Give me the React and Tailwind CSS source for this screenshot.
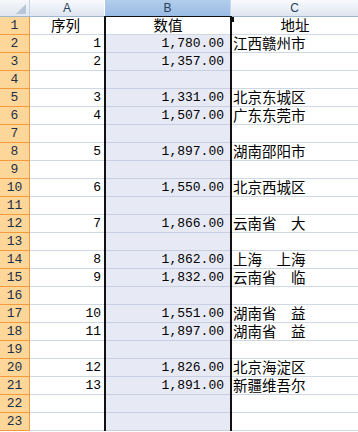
const rows = [
  ["1", "序列", "数值", "地址"],
  ["2", "1", "1,780.00", "江西赣州市"],
  ["3", "2", "1,357.00", ""],
  ["4", "", "", ""],
  ["5", "3", "1,331.00", "北京东城区"],
  ["6", "4", "1,507.00", "广东东莞市"],
  ["7", "", "", ""],
  ["8", "5", "1,897.00", "湖南邵阳市"],
  ["9", "", "", ""],
  ["10", "6", "1,550.00", "北京西城区"],
  ["11", "", "", ""],
  ["12", "7", "1,866.00", "云南省\u3000大"],
  ["13", "", "", ""],
  ["14", "8", "1,862.00", "上海\u3000上海"],
  ["15", "9", "1,832.00", "云南省\u3000临"],
  ["16", "", "", ""],
  ["17", "10", "1,551.00", "湖南省\u3000益"],
  ["18", "11", "1,897.00", "湖南省\u3000益"],
  ["19", "", "", ""],
  ["20", "12", "1,826.00", "北京海淀区"],
  ["21", "13", "1,891.00", "新疆维吾尔"],
  ["22", "", "", ""],
  ["23", "", "", ""],
];

const mono = "font-['Liberation_Mono',monospace] text-[13px] leading-none text-black";
const cjk = "font-['Noto_Sans_CJK_SC','Noto_Sans',sans-serif] text-[14.5px] leading-none text-black";

function HeaderRow() {
  return (
    <div className="flex h-[17px] border-b border-[#9eb6ce]">
      <div className="relative w-[30px] shrink-0 border-r border-[#c5d2e2] bg-gradient-to-b from-[#f6f8fb] to-[#dfe6ef]">
        <div className="absolute bottom-[2px] right-[3px] h-0 w-0 border-b-[10px] border-l-[10px] border-b-[#b8c6d8] border-l-transparent" />
      </div>
      <div className="flex w-[75px] shrink-0 items-center justify-center border-r border-white bg-gradient-to-b from-[#f8fafd] to-[#dfe6f1] font-['Liberation_Sans',sans-serif] text-[12px] leading-none text-[#27415f]">
        A
      </div>
      <div className="flex w-[126px] shrink-0 items-center justify-center border-r border-[#c9daee] bg-gradient-to-b from-[#b3cdec] to-[#99bbe4] font-['Liberation_Sans',sans-serif] text-[12px] leading-none text-[#27415f]">
        B
      </div>
      <div className="flex flex-1 items-center justify-center bg-gradient-to-b from-[#f8fafd] to-[#dfe6f1] font-['Liberation_Sans',sans-serif] text-[12px] leading-none text-[#27415f]">
        C
      </div>
    </div>
  );
}

function Row({ r, i }) {
  const head = i === 0;
  return (
    <div className="flex h-[18px]">
      <div className="flex w-[30px] shrink-0 items-center justify-center border-b border-r border-[#f29a3c] bg-[#fdd69a] font-['Liberation_Mono',monospace] text-[13px] leading-none text-[#1e2f45]">
        {r[0]}
      </div>
      <div className={`flex w-[74px] shrink-0 items-center border-b border-[#d0d7e5] bg-white pr-[3px] ${head ? "justify-center " + cjk : "justify-end " + mono}`}>
        {r[1]}
      </div>
      <div className={`relative flex w-[128px] shrink-0 items-center border-x-2 border-x-[#111] ${head ? "bg-white" : "bg-[#e7e9f4]"}`}>
        <div className={`flex h-full flex-1 items-center border-b ${head ? "border-[#d0d7e5] justify-center " + cjk : "border-[#c9cfe2] justify-end pr-[6px] " + mono}`}>
          {r[2]}
        </div>
        {head && <div className="absolute -right-[4px] top-0 h-[5px] w-[4px] bg-[#111]" />}
      </div>
      <div className={`flex flex-1 items-center overflow-hidden whitespace-pre border-b border-[#d0d7e5] bg-white ${head ? "justify-center " : "pl-[1px] "}${cjk}`}>
        {r[3]}
      </div>
    </div>
  );
}

export default function App() {
  return (
    <div className="h-[432px] w-[358px] overflow-hidden bg-white">
      <HeaderRow />
      <div className="relative">
        <div className="pointer-events-none absolute left-[104px] top-0 h-[2px] w-[128px] -translate-y-[1px] bg-[#111]" />
        {rows.map((r, i) => (
          <Row key={r[0]} r={r} i={i} />
        ))}
      </div>
    </div>
  );
}
